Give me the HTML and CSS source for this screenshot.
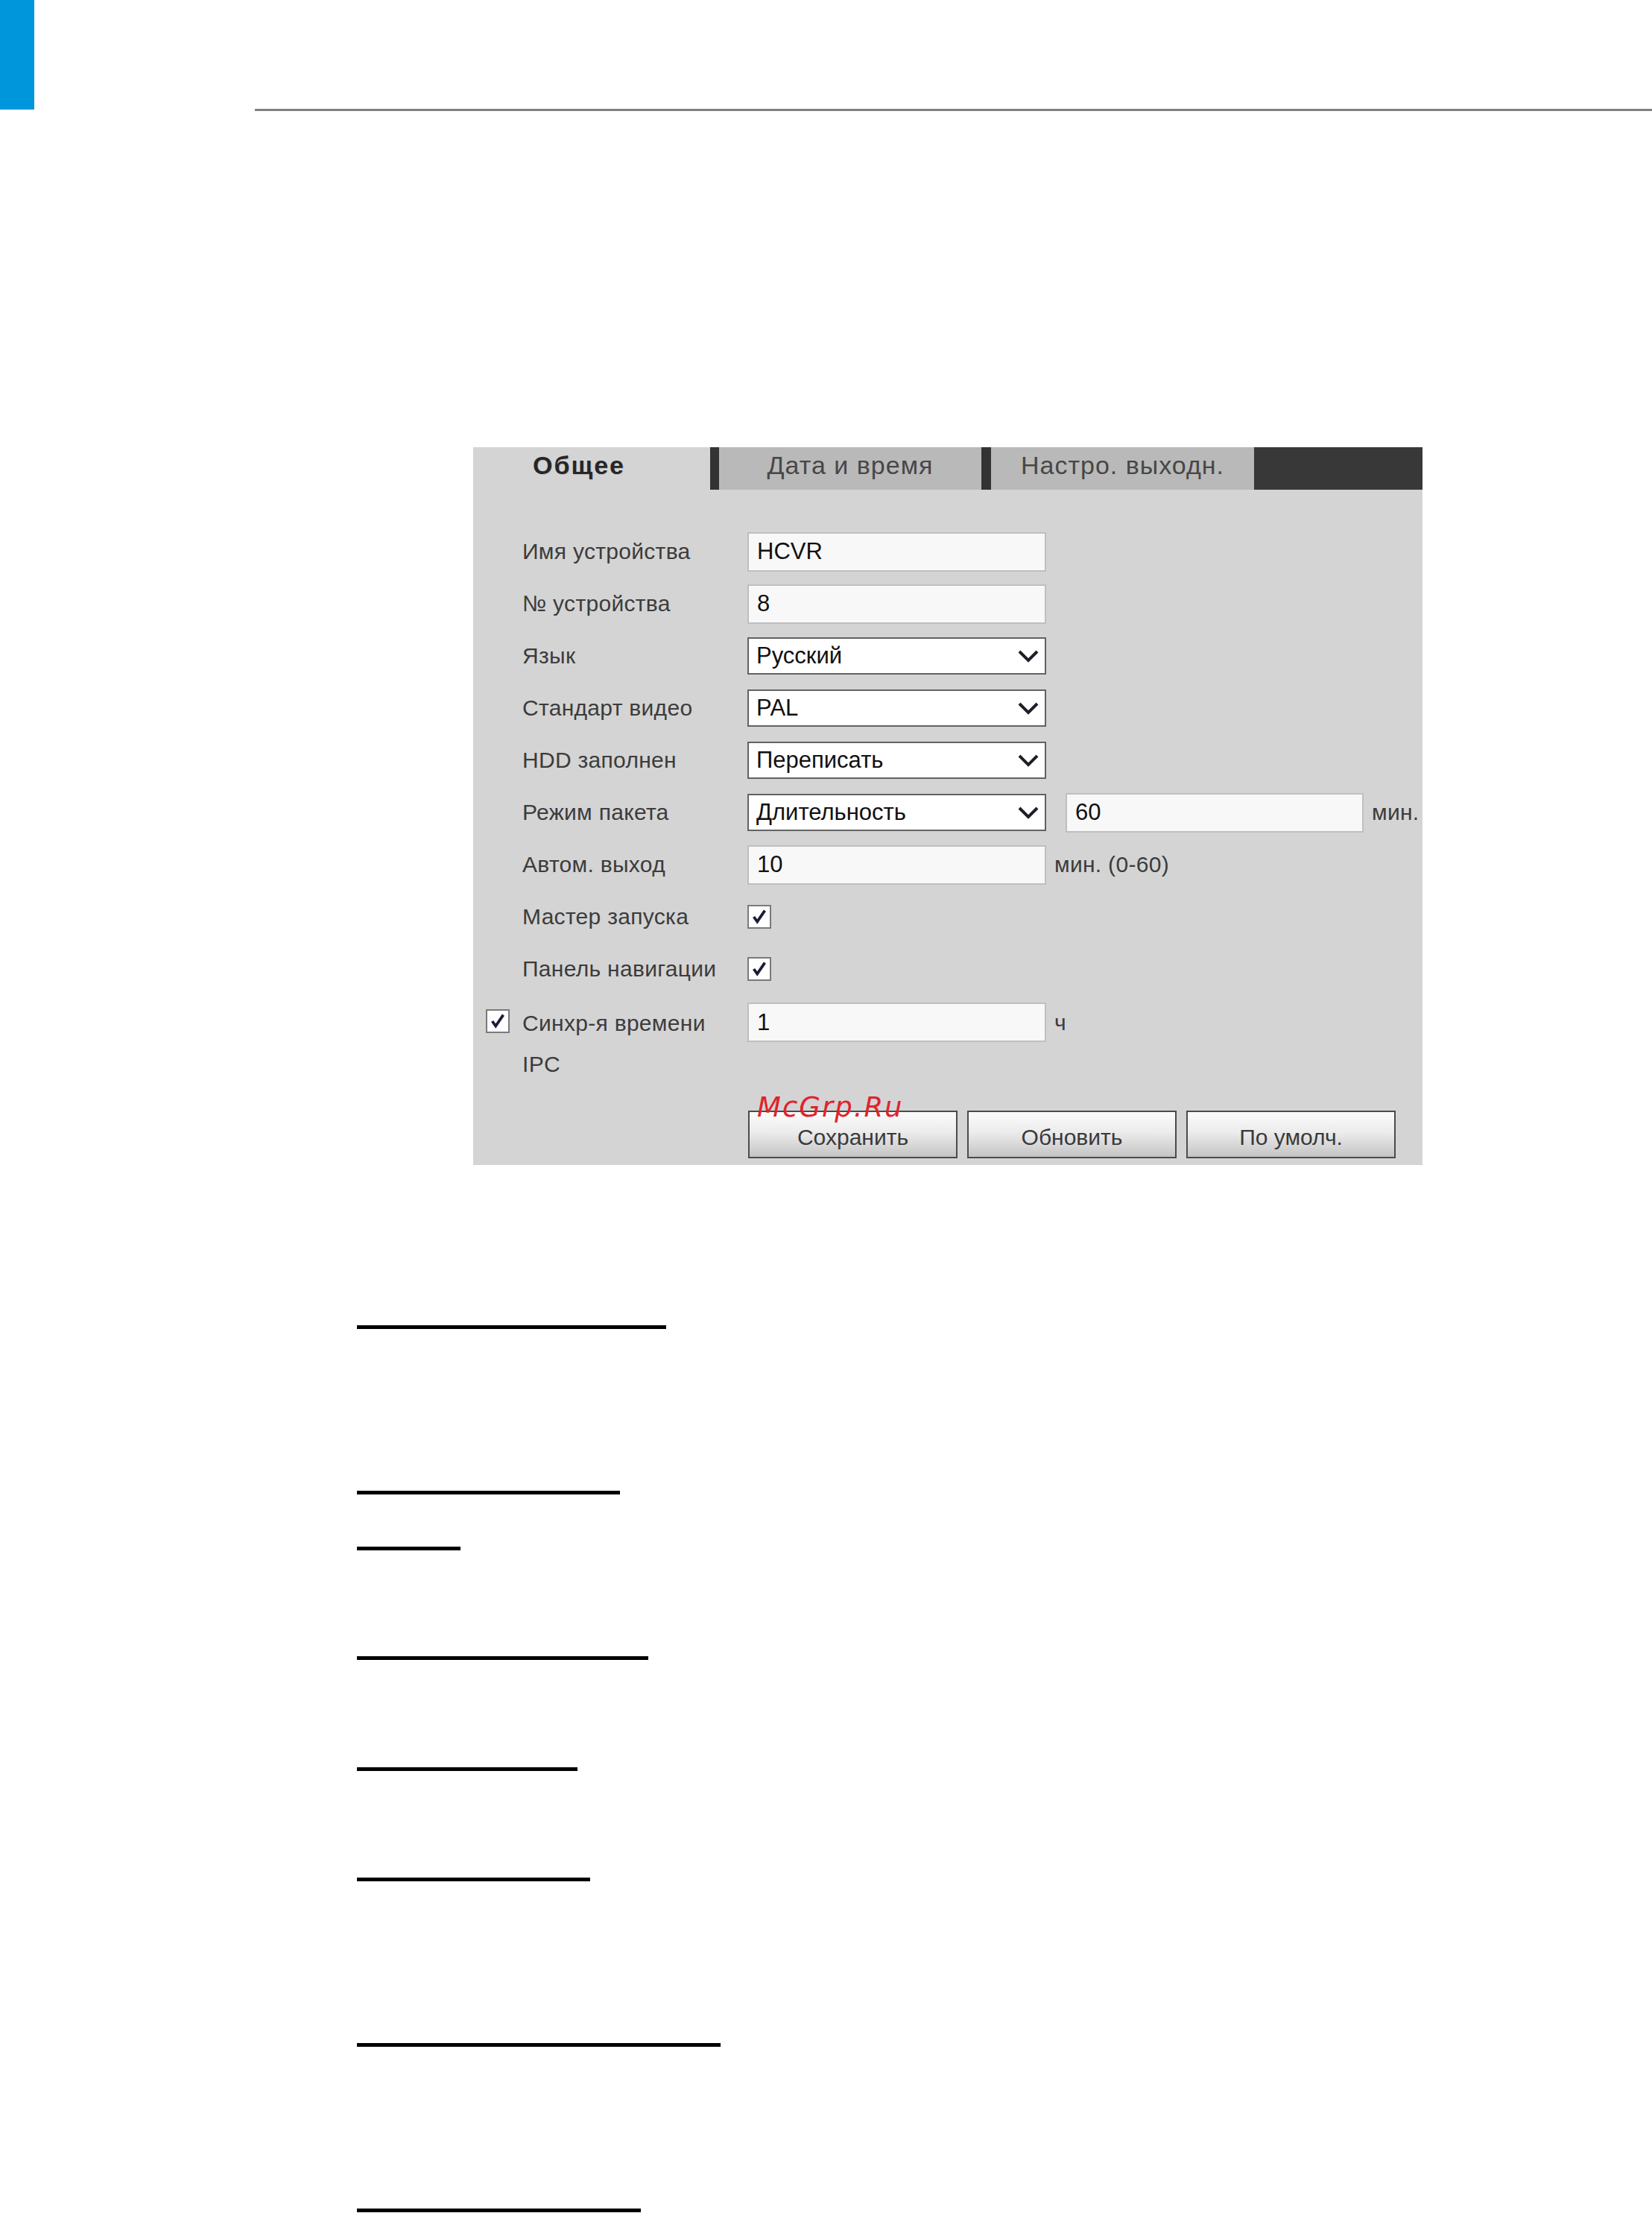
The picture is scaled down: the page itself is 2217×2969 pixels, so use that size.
FILE: index.html
```html
<!DOCTYPE html>
<html lang="ru">
<head>
    <meta charset="UTF-8">
    <title>Общее - настройки</title>
    <link rel="stylesheet" href="styles.css">
</head>
<body>
    <!-- Page header -->
    <div class="page-head">
        <div class="edge"></div>
    </div>
    <div class="head-rule"></div>

    <!-- Settings panel -->
    <div class="panel">
        <div class="tabs">
            <div class="tab tab-active">Общее</div>
            <div class="tab">Дата и время</div>
            <div class="tab">Настро. выходн.</div>
            <div class="tab-fill"></div>
        </div>

        <div class="form">
            <div class="row">
                <div class="lead"></div>
                <div class="label">Имя устройства</div>
                <input class="field" type="text" value="HCVR">
            </div>
            <div class="row">
                <div class="lead"></div>
                <div class="label">№ устройства</div>
                <input class="field" type="text" value="8">
            </div>
            <div class="row">
                <div class="lead"></div>
                <div class="label">Язык</div>
                <div class="select">
                    <span>Русский</span>
                    <svg class="chevron" viewBox="0 0 28 18"><path d="M2 3 L14 15 L26 3" /></svg>
                </div>
            </div>
            <div class="row">
                <div class="lead"></div>
                <div class="label">Стандарт видео</div>
                <div class="select">
                    <span>PAL</span>
                    <svg class="chevron" viewBox="0 0 28 18"><path d="M2 3 L14 15 L26 3" /></svg>
                </div>
            </div>
            <div class="row">
                <div class="lead"></div>
                <div class="label">HDD заполнен</div>
                <div class="select">
                    <span>Переписать</span>
                    <svg class="chevron" viewBox="0 0 28 18"><path d="M2 3 L14 15 L26 3" /></svg>
                </div>
            </div>
            <div class="row">
                <div class="lead"></div>
                <div class="label">Режим пакета</div>
                <div class="select">
                    <span>Длительность</span>
                    <svg class="chevron" viewBox="0 0 28 18"><path d="M2 3 L14 15 L26 3" /></svg>
                </div>
                <input class="field field-wide" type="text" value="60">
                <span class="unit">мин.</span>
            </div>
            <div class="row">
                <div class="lead"></div>
                <div class="label">Автом. выход</div>
                <input class="field" type="text" value="10">
                <span class="unit">мин. (0-60)</span>
            </div>
            <div class="row">
                <div class="lead"></div>
                <div class="label">Мастер запуска</div>
                <span class="check">
                    <svg viewBox="0 0 28 28"><path d="M6 14 L11 21 L22 5" /></svg>
                </span>
            </div>
            <div class="row">
                <div class="lead"></div>
                <div class="label">Панель навигации</div>
                <span class="check">
                    <svg viewBox="0 0 28 28"><path d="M6 14 L11 21 L22 5" /></svg>
                </span>
            </div>
            <div class="row row-tall">
                <div class="lead">
                    <span class="check">
                        <svg viewBox="0 0 28 28"><path d="M6 14 L11 21 L22 5" /></svg>
                    </span>
                </div>
                <div class="label label-wrap">Синхр-я времени<br>IPC</div>
                <div class="inline">
                    <input class="field" type="text" value="1">
                    <span class="unit">ч</span>
                </div>
            </div>

            <div class="actions">
                <button class="btn">Сохранить</button>
                <button class="btn">Обновить</button>
                <button class="btn">По умолч.</button>
            </div>

            <span class="watermark">McGrp.Ru</span>
        </div>
    </div>

    <div class="rules">
        <div class="rule rule-1"></div>
        <div class="rule rule-2"></div>
        <div class="rule rule-3"></div>
        <div class="rule rule-4"></div>
        <div class="rule rule-5"></div>
        <div class="rule rule-6"></div>
        <div class="rule rule-7"></div>
        <div class="rule rule-8"></div>
    </div>
</body>
</html>
```

FILE: styles.css
```css
* {
    margin: 0;
    padding: 0;
    box-sizing: border-box;
}

body {
    width: 2217px;
    height: 2969px;
    overflow: hidden;
    background: #fff;
    font-family: 'Liberation Sans', Arial, sans-serif;
    color: #3c3c3c;
}

/* Header */
.page-head {
    height: 146px;
}

.edge {
    width: 46px;
    height: 147px;
    background: #0096db;
}

.head-rule {
    margin-left: 342px;
    height: 3px;
    background: #808080;
}

/* Panel */
.panel {
    position: relative;
    margin-top: 451px;
    margin-left: 635px;
    width: 1274px;
    background: #d4d4d4;
    padding-bottom: 9px;
}

.tabs {
    display: flex;
    height: 57px;
}

.tab {
    font-size: 34px;
    letter-spacing: 1px;
    line-height: 48px;
    color: #474747;
    text-align: center;
    background: #b9b9b9;
    border-left: 12px solid #333;
    width: 364px;
    white-space: nowrap;
}

.tab:nth-child(3) {
    border-left-width: 13px;
    width: 366px;
}

.tab-active {
    width: 318px;
    border-left: none;
    background: #d4d4d4;
    text-align: left;
    padding-left: 80px;
    font-weight: bold;
    font-size: 34px;
    letter-spacing: 2px;
    color: #262626;
    text-shadow: 1px 1px 0 rgba(0, 0, 0, 0.15);
}

.tab-fill {
    flex: 1;
    background: #383838;
}

/* Form rows */
.form {
    padding-top: 48px;
}

.row {
    display: flex;
    align-items: center;
    height: 70px;
}

.lead {
    width: 66px;
    padding-left: 17px;
    flex-shrink: 0;
}

.label {
    width: 302px;
    flex-shrink: 0;
    font-size: 30px;
    letter-spacing: 0.3px;
    white-space: nowrap;
}

.row-tall {
    height: auto;
    align-items: flex-start;
    padding-top: 10px;
}

.row-tall .lead {
    padding-top: 9px;
}

.label-wrap {
    line-height: 55px;
}

.inline {
    display: flex;
    align-items: center;
}

.field {
    width: 401px;
    height: 53px;
    border: 2px solid #bfbfbf;
    background: #f8f8f8;
    font-family: inherit;
    font-size: 31px;
    color: #111;
    padding-left: 11px;
    outline: none;
}

.field-wide {
    width: 400px;
    margin-left: 26px;
}

.select {
    width: 401px;
    height: 50px;
    border: 2px solid #626262;
    background: #fff;
    display: flex;
    align-items: center;
    justify-content: space-between;
    padding: 0 8px 0 10px;
    font-size: 31px;
    color: #111;
}

.chevron {
    width: 28px;
    height: 18px;
    fill: none;
    stroke: #1e1e28;
    stroke-width: 4;
}

.unit {
    margin-left: 11px;
    font-size: 30px;
    letter-spacing: 0.3px;
    white-space: nowrap;
}

.check {
    display: inline-flex;
    width: 32px;
    height: 32px;
    border: 2px solid #7a7a7a;
    background: #fff;
    align-items: center;
    justify-content: center;
}

.check svg {
    width: 26px;
    height: 26px;
    fill: none;
    stroke: #1b1b3a;
    stroke-width: 4;
}

/* Buttons */
.actions {
    display: flex;
    gap: 13px;
    margin-top: 35px;
    margin-left: 369px;
}

.btn {
    width: 281px;
    height: 64px;
    border: 2px solid #4b4b4b;
    background: linear-gradient(180deg, #fbfbfb 0%, #ececec 45%, #c4c4c4 100%);
    font-family: inherit;
    font-size: 30px;
    color: #3a3a3a;
    padding-top: 8px;
}

.watermark {
    position: absolute;
    left: 381px;
    top: 864px;
    font-family: 'DejaVu Sans', sans-serif;
    font-style: italic;
    font-size: 37px;
    letter-spacing: 2px;
    line-height: 44px;
    color: #e0232b;
}

/* Rules below panel */
.rules {
    margin-left: 479px;
}

.rule {
    height: 5px;
    background: #000;
}

.rule-1 { width: 415px; margin-top: 215px; }
.rule-2 { width: 353px; margin-top: 217px; }
.rule-3 { width: 139px; margin-top: 70px; }
.rule-4 { width: 391px; margin-top: 142px; }
.rule-5 { width: 296px; margin-top: 144px; }
.rule-6 { width: 313px; margin-top: 143px; }
.rule-7 { width: 488px; margin-top: 217px; }
.rule-8 { width: 381px; margin-top: 217px; }
```
